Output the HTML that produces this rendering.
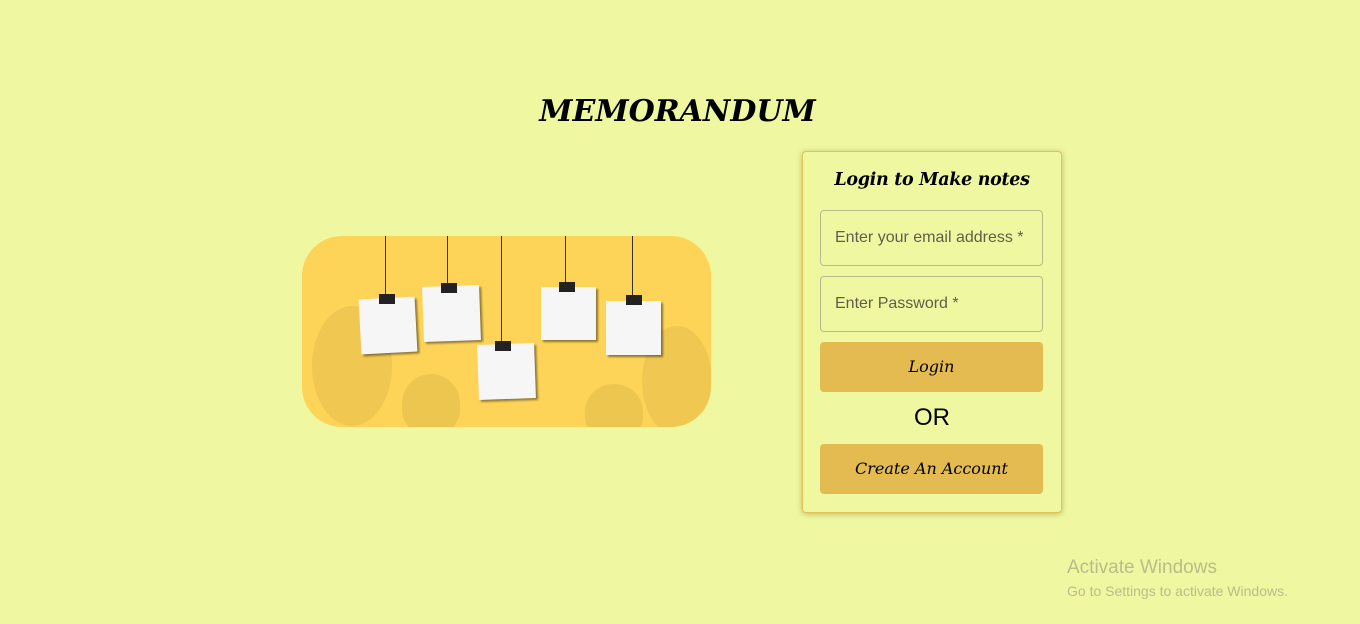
<!DOCTYPE html>
<html><head><style>
body{margin:0;width:1360px;height:624px;background:#eff7a1;position:relative;overflow:hidden;font-family:"Liberation Sans",sans-serif}
h1{position:absolute;left:0;width:1355px;top:94px;margin:0;text-align:center;font:italic bold 30px "DejaVu Serif",serif}
.img{position:absolute;left:302px;top:236px;width:409px;height:191px;border-radius:40px;background:#fed458;overflow:hidden}
.s{position:absolute;background:#f6f6f6;box-shadow:2px 2px 2px rgba(0,0,0,.45)}
.str{position:absolute;top:0;width:1px;background:#333}
.c{position:absolute;width:16px;height:10px;background:#222}
.leaf{position:absolute;background:rgba(200,165,60,.3);border-radius:50% 50% 40% 40%}
.card{position:absolute;left:802px;top:151px;width:258px;height:360px;border:1px solid #e3c25a;border-radius:4px;background:#eff7a1;box-shadow:0 1px 6px rgba(120,110,30,.45)}
.card h2{margin:0;position:absolute;top:18px;width:100%;text-align:center;font:italic bold 17.5px "DejaVu Serif",serif;letter-spacing:-0.3px}
.in{position:absolute;left:17px;width:223px;height:56px;border:1px solid #b9b98a;border-radius:4px;box-sizing:border-box;padding-left:14px;line-height:54px;color:#5f5f4a;font-size:16px}
.btn{position:absolute;left:17px;width:223px;height:50px;background:#e3bb50;border-radius:4px;text-align:center;font:italic 16px/50px "DejaVu Serif",serif}
.or{position:absolute;top:252px;width:100%;text-align:center;font-size:24px}
.w1{position:absolute;left:1067px;top:557px;color:#b9bd8c;font-size:19px}
.w2{position:absolute;left:1067px;top:583px;color:#b9bd8c;font-size:14px}
</style></head><body>
<h1>MEMORANDUM</h1>
<div class="img">
<div class="leaf" style="left:100px;top:138px;width:58px;height:60px"></div>
<div class="leaf" style="left:283px;top:148px;width:58px;height:55px"></div>
<div class="leaf" style="left:10px;top:70px;width:80px;height:120px;border-radius:50%;background:rgba(190,160,60,.22)"></div>
<div class="leaf" style="left:340px;top:90px;width:70px;height:110px;border-radius:50%;background:rgba(190,160,60,.22)"></div>
<div class="str" style="left:83px;height:62px"></div>
<div class="str" style="left:145px;height:50px"></div>
<div class="str" style="left:199px;height:108px"></div>
<div class="str" style="left:263px;height:50px"></div>
<div class="str" style="left:330px;height:62px"></div>
<div class="s" style="left:58px;top:62px;width:56px;height:55px;transform:rotate(-3deg)"></div>
<div class="s" style="left:121px;top:50px;width:57px;height:55px;transform:rotate(-2deg)"></div>
<div class="s" style="left:176px;top:108px;width:57px;height:55px;transform:rotate(-2deg)"></div>
<div class="s" style="left:239px;top:51px;width:55px;height:53px"></div>
<div class="s" style="left:304px;top:65px;width:55px;height:54px"></div>
<div class="c" style="left:77px;top:58px"></div>
<div class="c" style="left:139px;top:47px"></div>
<div class="c" style="left:193px;top:105px"></div>
<div class="c" style="left:257px;top:46px"></div>
<div class="c" style="left:324px;top:59px"></div>
</div>
<div class="card">
<h2>Login to Make notes</h2>
<div class="in" style="top:58px">Enter your email address *</div>
<div class="in" style="top:124px">Enter Password *</div>
<div class="btn" style="top:190px">Login</div>
<div class="or">OR</div>
<div class="btn" style="top:292px">Create An Account</div>
</div>
<div class="w1">Activate Windows</div>
<div class="w2">Go to Settings to activate Windows.</div>
</body></html>
